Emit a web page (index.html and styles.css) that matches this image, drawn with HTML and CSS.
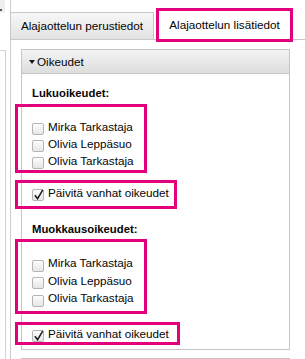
FILE: index.html
```html
<!DOCTYPE html>
<html lang="fi">
<head>
<meta charset="utf-8">
<title>Alajaottelun lisätiedot</title>
<link rel="stylesheet" href="styles.css">
</head>
<body>
<div class="page">
  <div class="side">
    <div class="side-top"><span class="side-mark"></span></div>
    <div class="side-rest"></div>
  </div>
  <div class="frame">
    <div class="tabs">
      <div class="tab">Alajaottelun perustiedot</div>
      <div class="tab tab-active">Alajaottelun lisätiedot</div>
    </div>
    <div class="content">
      <div class="panel">
        <div class="panel-head"><svg class="caret" width="6" height="4" viewBox="0 0 6 4"><path d="M0 0H6L3 4Z" fill="#1a1a1a"/></svg>Oikeudet</div>
        <div class="panel-body">
          <div class="label">Lukuoikeudet:</div>
          <div class="hl hl-list">
            <label class="row"><span class="cb"></span>Mirka Tarkastaja</label>
            <label class="row"><span class="cb"></span>Olivia Leppäsuo</label>
            <label class="row"><span class="cb"></span>Olivia Tarkastaja</label>
          </div>
          <div class="hl hl-update">
            <label class="row"><span class="cb"><svg class="tick" width="13" height="13" viewBox="0 0 13 13"><path d="M2.8 6.2 L5.6 9.6 L10.8 0.8" fill="none" stroke="#1c1c1c" stroke-width="1.5"/></svg></span>Päivitä vanhat oikeudet</label>
          </div>
          <div class="label label-edit">Muokkausoikeudet:</div>
          <div class="hl hl-list hl-list-2">
            <label class="row"><span class="cb"></span>Mirka Tarkastaja</label>
            <label class="row"><span class="cb"></span>Olivia Leppäsuo</label>
            <label class="row"><span class="cb"></span>Olivia Tarkastaja</label>
          </div>
          <div class="hl hl-update hl-update-2">
            <label class="row"><span class="cb"><svg class="tick" width="13" height="13" viewBox="0 0 13 13"><path d="M2.8 6.2 L5.6 9.6 L10.8 0.8" fill="none" stroke="#1c1c1c" stroke-width="1.5"/></svg></span>Päivitä vanhat oikeudet</label>
          </div>
        </div>
      </div>
      <div class="panel panel-next"></div>
    </div>
  </div>
</div>
</body>
</html>
```

FILE: styles.css
```css
* { box-sizing: border-box; }
html, body { margin: 0; padding: 0; background: #fff; }
body {
  font-family: "Liberation Sans", Arial, sans-serif;
  font-size: 11.7px;
  color: #050505;
}
.page {
  display: flex;
  height: 359px;
  overflow: hidden;
}
.side {
  width: 6px;
  flex: none;
  display: flex;
  flex-direction: column;
}
.side-top {
  width: 5px;
  height: 13px;
  background: #eeeeee;
  position: relative;
}
.side-mark {
  position: absolute;
  left: 0;
  top: 9px;
  width: 2px;
  height: 2px;
  background: #555;
}
.side-rest {
  margin-top: 37px;
  flex: 1;
  border-top: 1px solid #d2d2d2;
  border-right: 1px solid #d2d2d2;
}
.frame {
  flex: 1;
  margin-left: 4px;
  border-left: 1px solid #cdcdcd;
  min-width: 0;
}
.tabs {
  display: flex;
  align-items: flex-end;
  gap: 2px;
  margin-left: -1px;
  padding-top: 8px;
  border-bottom: 1px solid #c8c8c8;
}
.tab {
  width: 144px;
  height: 27px;
  border: 1px solid #c8c8c8;
  border-bottom: none;
  background: linear-gradient(#f7f7f7, #e2e2e2);
  text-align: center;
  line-height: 26px;
  white-space: nowrap;
}
.tab-active {
  width: 137px;
  height: 34px;
  margin-bottom: -3px;
  border: 3px solid #e4007c;
  background: #fff;
  line-height: 27px;
  position: relative;
  z-index: 1;
}
.content {
  padding: 9px 0 0 10px;
}
.panel {
  width: 269px;
  border: 1px solid #c6c6c6;
}
.panel-head {
  height: 24px;
  border-bottom: 1px solid #c6c6c6;
  background: linear-gradient(#f4f4f4, #dddddd);
  line-height: 23px;
  padding-left: 7px;
  display: flex;
  align-items: center;
  gap: 1px;
}
.caret { margin-right: 1px; }
.panel-body {
  padding: 12px 10px 4px 10px;
}
.label {
  font-weight: bold;
  line-height: 14px;
  font-size: 11.3px;
}
.label-edit { margin-top: 13px; }
.hl {
  border: 3px solid #e4007c;
  margin-left: -17px;
  padding-left: 14px;
}
.hl-list {
  width: 132px;
  margin-top: 4px;
  padding-top: 11px;
  padding-bottom: 1px;
}
.hl-list-2 {
  margin-top: 3px;
  padding-top: 12px;
  padding-bottom: 4px;
}
.hl-update {
  width: 162px;
  margin-top: 7px;
  padding-top: 1px;
  padding-bottom: 5px;
}
.hl-update-2 {
  width: 165px;
  margin-top: 8px;
  padding-top: 0;
  padding-bottom: 0;
}
.row {
  display: flex;
  align-items: center;
  height: 17px;
  white-space: nowrap;
}
.hl-list-2 .row { height: 17.5px; }
.cb {
  width: 12px;
  height: 12px;
  margin-right: 4px;
  align-self: flex-end;
  border: 1px solid #b4b4b4;
  border-radius: 2px;
  background: linear-gradient(#fdfdfd, #e6e6e6);
  position: relative;
  flex: none;
}
.tick {
  position: absolute;
  left: -1px;
  top: -1px;
  overflow: visible;
}
.panel-next {
  margin-top: 8px;
  height: 12px;
  border-bottom: none;
}
```
